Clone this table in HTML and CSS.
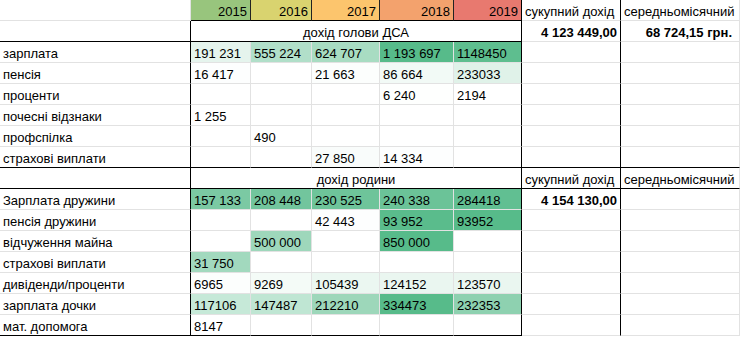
FILE: index.html
```html
<!DOCTYPE html>
<html lang="uk">
<head>
<meta charset="utf-8">
<title>Доходи</title>
<link rel="stylesheet" href="styles.css">
</head>
<body>
<div class="sheet">
  <!-- row 0: years -->
  <div class="cell"></div>
  <div class="cell yr y15">2015</div>
  <div class="cell yr y16">2016</div>
  <div class="cell yr y17">2017</div>
  <div class="cell yr y18">2018</div>
  <div class="cell yr y19">2019</div>
  <div class="cell br">сукупний дохід</div>
  <div class="cell">середньомісячний</div>

  <!-- row 1 -->
  <div class="cell br bb"></div>
  <div class="cell span5 center br bb">дохід голови ДСА</div>
  <div class="cell num b br">4 123 449,00</div>
  <div class="cell num b last">68 724,15 грн.</div>

  <!-- row 2 -->
  <div class="cell br">зарплата</div>
  <div class="cell" style="background:#e5f4ed">191 231</div>
  <div class="cell" style="background:#b1dfc9">555 224</div>
  <div class="cell" style="background:#a8dcc2">624 707</div>
  <div class="cell" style="background:#57bb8a">1 193 697</div>
  <div class="cell br" style="background:#5ebe8f">1148450</div>
  <div class="cell br"></div>
  <div class="cell"></div>

  <!-- row 3 -->
  <div class="cell br">пенсія</div>
  <div class="cell" style="background:#fdfefe">16 417</div>
  <div class="cell"></div>
  <div class="cell" style="background:#fcfefd">21 663</div>
  <div class="cell" style="background:#f2faf6">86 664</div>
  <div class="cell br" style="background:#e0f2e9">233033</div>
  <div class="cell br"></div>
  <div class="cell"></div>

  <!-- row 4 -->
  <div class="cell br">проценти</div>
  <div class="cell"></div>
  <div class="cell"></div>
  <div class="cell"></div>
  <div class="cell" style="background:#fefffe">6 240</div>
  <div class="cell br">2194</div>
  <div class="cell br"></div>
  <div class="cell"></div>

  <!-- row 5 -->
  <div class="cell br">почесні відзнаки</div>
  <div class="cell">1 255</div>
  <div class="cell"></div>
  <div class="cell"></div>
  <div class="cell"></div>
  <div class="cell br"></div>
  <div class="cell br"></div>
  <div class="cell"></div>

  <!-- row 6 -->
  <div class="cell br">профспілка</div>
  <div class="cell"></div>
  <div class="cell">490</div>
  <div class="cell"></div>
  <div class="cell"></div>
  <div class="cell br"></div>
  <div class="cell br"></div>
  <div class="cell"></div>

  <!-- row 7 -->
  <div class="cell br bb">страхові виплати</div>
  <div class="cell bb"></div>
  <div class="cell bb"></div>
  <div class="cell bb" style="background:#f9fcfb">27 850</div>
  <div class="cell bb" style="background:#fdfefe">14 334</div>
  <div class="cell br bb"></div>
  <div class="cell br bb"></div>
  <div class="cell bb"></div>

  <!-- row 8 -->
  <div class="cell br bb"></div>
  <div class="cell span5 center br bb">дохід родини</div>
  <div class="cell br bb">сукупний дохід</div>
  <div class="cell bb">середньомісячний</div>

  <!-- row 9 -->
  <div class="cell br">Зарплата дружини</div>
  <div class="cell" style="background:#7bc9a3">157 133</div>
  <div class="cell" style="background:#72c59d">208 448</div>
  <div class="cell" style="background:#6ec49a">230 525</div>
  <div class="cell" style="background:#6bc398">240 338</div>
  <div class="cell br" style="background:#61bf92">284418</div>
  <div class="cell num b br">4 154 130,00</div>
  <div class="cell"></div>

  <!-- row 10 -->
  <div class="cell br">пенсія дружини</div>
  <div class="cell"></div>
  <div class="cell"></div>
  <div class="cell" style="background:#fdfefe">42 443</div>
  <div class="cell" style="background:#5abc8c">93 952</div>
  <div class="cell br" style="background:#57bb8a">93952</div>
  <div class="cell br"></div>
  <div class="cell"></div>

  <!-- row 11 -->
  <div class="cell br">відчуження майна</div>
  <div class="cell"></div>
  <div class="cell" style="background:#9ed7bb">500 000</div>
  <div class="cell"></div>
  <div class="cell" style="background:#57bb8a">850 000</div>
  <div class="cell br"></div>
  <div class="cell br"></div>
  <div class="cell"></div>

  <!-- row 12 -->
  <div class="cell br">страхові виплати</div>
  <div class="cell" style="background:#a2d9be">31 750</div>
  <div class="cell"></div>
  <div class="cell"></div>
  <div class="cell"></div>
  <div class="cell br"></div>
  <div class="cell br"></div>
  <div class="cell"></div>

  <!-- row 13 -->
  <div class="cell br">дивіденди/проценти</div>
  <div class="cell" style="background:#fcfefd">6965</div>
  <div class="cell" style="background:#f4fbf7">9269</div>
  <div class="cell" style="background:#ebf7f1">105439</div>
  <div class="cell" style="background:#eaf6f0">124152</div>
  <div class="cell br" style="background:#eaf6f0">123570</div>
  <div class="cell br"></div>
  <div class="cell"></div>

  <!-- row 14 -->
  <div class="cell br">зарплата дочки</div>
  <div class="cell" style="background:#c6e9d8">117106</div>
  <div class="cell" style="background:#bfe6d3">147487</div>
  <div class="cell" style="background:#9dd7ba">212210</div>
  <div class="cell" style="background:#57bb8a">334473</div>
  <div class="cell br" style="background:#8ed1b0">232353</div>
  <div class="cell br"></div>
  <div class="cell"></div>

  <!-- row 15 -->
  <div class="cell br bb">мат. допомога</div>
  <div class="cell bb">8147</div>
  <div class="cell bb"></div>
  <div class="cell bb"></div>
  <div class="cell bb"></div>
  <div class="cell br bb"></div>
  <div class="cell br"></div>
  <div class="cell"></div>
</div>
</body>
</html>
```
FILE: styles.css
```css
html, body {
  margin: 0;
  padding: 0;
  background: #fff;
}

body {
  font-family: "Liberation Sans", Arial, sans-serif;
  font-size: 13px;
  color: #000;
  overflow: hidden;
}

.sheet {
  display: grid;
  grid-template-columns: 191px 60px 61px 68px 74px 68px 99px 119px;
  grid-auto-rows: 21px;
  width: 740px;
}

.cell {
  box-sizing: border-box;
  height: 21px;
  padding: 1px 3px 0 3px;
  line-height: 21px;
  white-space: nowrap;
  border-right: 1px solid #e2e2e2;
  border-bottom: 1px solid #e2e2e2;
}

.br { border-right-color: #000; }
.bb { border-bottom-color: #000; }

.span5 { grid-column: span 5; }
.center { text-align: center; }
.num { text-align: right; }
.b { font-weight: bold; }
.last { padding-right: 7px; }

.yr {
  text-align: right;
  border-right-color: #222;
  border-bottom-color: #000;
}
.y15 { background: #98c57d; }
.y16 { background: #d9d36f; }
.y17 { background: #fcc56d; }
.y18 { background: #f3a26d; }
.y19 { background: #e8796f; border-right-color: #000; }
```
